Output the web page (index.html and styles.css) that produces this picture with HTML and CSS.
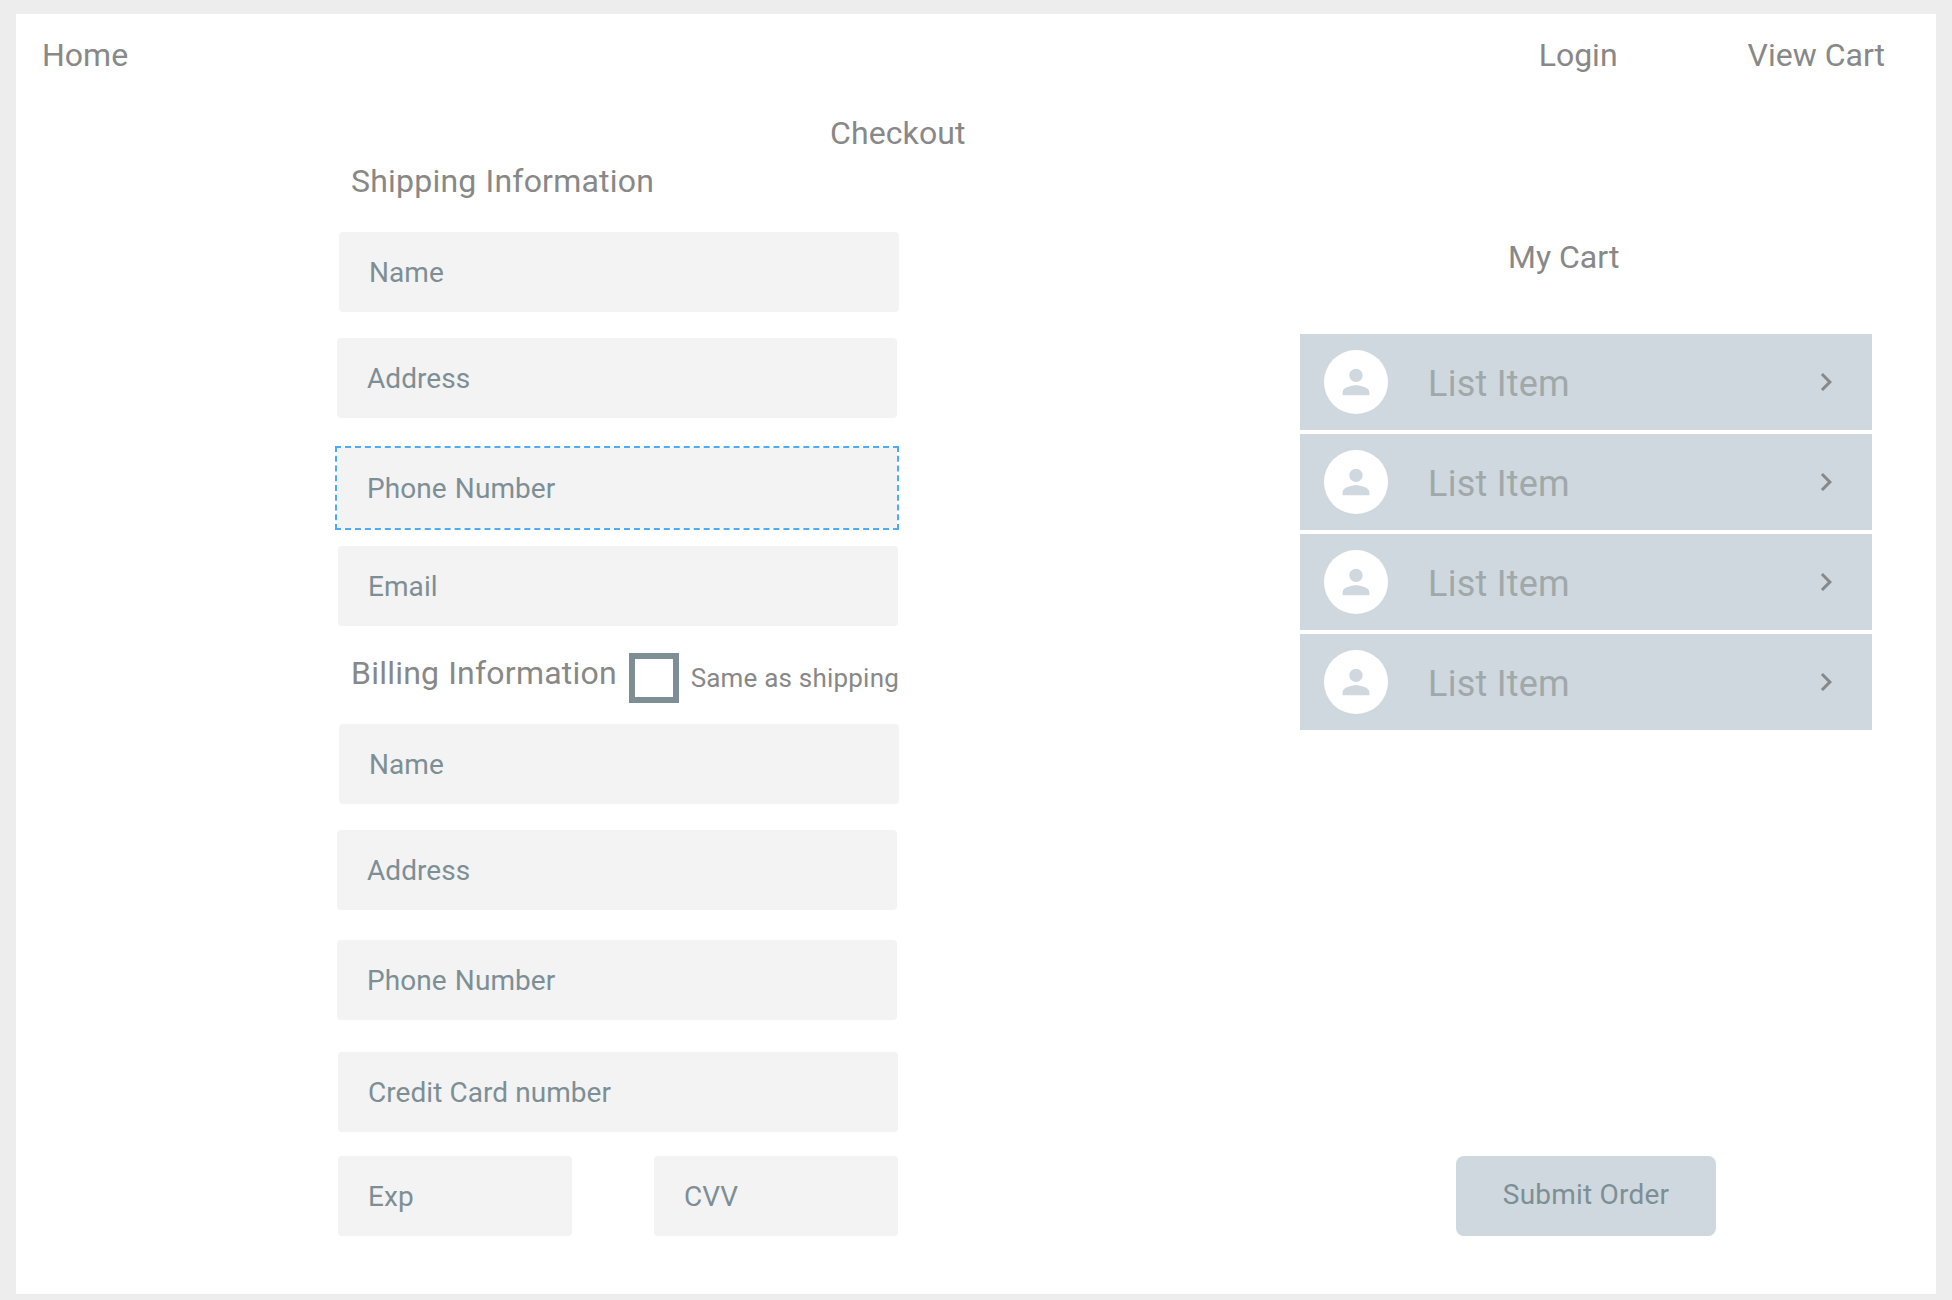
FILE: index.html
```html
<!DOCTYPE html>
<html lang="en">
<head>
<meta charset="utf-8">
<title>Checkout</title>
<link rel="stylesheet" href="styles.css">
</head>
<body>
<div class="page">
  <nav class="nav">
    <a class="nav-home">Home</a>
    <a class="nav-login">Login</a>
    <a class="nav-cart">View Cart</a>
  </nav>
  <h1 class="title">Checkout</h1>
  <main class="content">
    <form class="form">
      <h2 class="section">Shipping Information</h2>
      <div class="field field-name">Name</div>
      <div class="field field-address">Address</div>
      <div class="field field-phone selected">Phone Number</div>
      <div class="field field-email">Email</div>
      <div class="billing-head">
        <h2 class="section">Billing Information</h2>
        <span class="checkbox"></span>
        <span class="checkbox-label">Same as shipping</span>
      </div>
      <div class="field field-name-billing">Name</div>
      <div class="field field-address">Address</div>
      <div class="field field-phone-billing">Phone Number</div>
      <div class="field field-card">Credit Card number</div>
      <div class="card-row">
        <div class="field field-exp">Exp</div>
        <div class="field field-cvv">CVV</div>
      </div>
    </form>
    <aside class="cart">
      <h2 class="cart-title">My Cart</h2>
      <ul class="list">
        <li class="item">
          <span class="avatar"><svg viewBox="0 0 24 24"><path d="M12 12c2.21 0 4-1.79 4-4s-1.79-4-4-4-4 1.79-4 4 1.79 4 4 4zm0 2c-2.67 0-8 1.34-8 4v2h16v-2c0-2.66-5.33-4-8-4z"/></svg></span>
          <span class="item-text">List Item</span>
          <svg class="chevron" viewBox="0 0 24 24"><path d="M10 6L8.59 7.41 13.17 12l-4.58 4.59L10 18l6-6z"/></svg>
        </li>
        <li class="item">
          <span class="avatar"><svg viewBox="0 0 24 24"><path d="M12 12c2.21 0 4-1.79 4-4s-1.79-4-4-4-4 1.79-4 4 1.79 4 4 4zm0 2c-2.67 0-8 1.34-8 4v2h16v-2c0-2.66-5.33-4-8-4z"/></svg></span>
          <span class="item-text">List Item</span>
          <svg class="chevron" viewBox="0 0 24 24"><path d="M10 6L8.59 7.41 13.17 12l-4.58 4.59L10 18l6-6z"/></svg>
        </li>
        <li class="item">
          <span class="avatar"><svg viewBox="0 0 24 24"><path d="M12 12c2.21 0 4-1.79 4-4s-1.79-4-4-4-4 1.79-4 4 1.79 4 4 4zm0 2c-2.67 0-8 1.34-8 4v2h16v-2c0-2.66-5.33-4-8-4z"/></svg></span>
          <span class="item-text">List Item</span>
          <svg class="chevron" viewBox="0 0 24 24"><path d="M10 6L8.59 7.41 13.17 12l-4.58 4.59L10 18l6-6z"/></svg>
        </li>
        <li class="item">
          <span class="avatar"><svg viewBox="0 0 24 24"><path d="M12 12c2.21 0 4-1.79 4-4s-1.79-4-4-4-4 1.79-4 4 1.79 4 4 4zm0 2c-2.67 0-8 1.34-8 4v2h16v-2c0-2.66-5.33-4-8-4z"/></svg></span>
          <span class="item-text">List Item</span>
          <svg class="chevron" viewBox="0 0 24 24"><path d="M10 6L8.59 7.41 13.17 12l-4.58 4.59L10 18l6-6z"/></svg>
        </li>
      </ul>
      <button class="submit" type="button">Submit Order</button>
    </aside>
  </main>
</div>
</body>
</html>
```

FILE: styles.css
```css
* { box-sizing: border-box; }

body {
  margin: 0;
  padding: 14px 16px 6px;
  background: #ededed;
  font-family: Roboto, sans-serif;
  color: #888888;
  overflow: hidden;
}

.page {
  width: 1920px;
  height: 1280px;
  background: #ffffff;
}

.nav {
  display: flex;
  height: 99px;
  padding: 21px 51px 0 26px;
  font-size: 32px;
  line-height: 40px;
}

.nav-login { margin-left: auto; }
.nav-cart { margin-left: 130px; }

.title,
.section,
.cart-title {
  margin: 0;
  font-size: 32px;
  font-weight: 400;
  line-height: 40px;
  white-space: nowrap;
}

.title {
  padding-left: 814px;
  letter-spacing: 0.1px;
}

.content {
  display: flex;
  padding: 8px 64px 0 321px;
}

.form {
  width: 562px;
}

.section {
  padding-left: 14px;
  letter-spacing: 0.22px;
  word-spacing: 0.8px;
}

.field {
  width: 560px;
  height: 80px;
  padding-left: 30px;
  border-radius: 4px;
  background: #f3f3f3;
  color: #7d8f95;
  font-size: 28px;
  line-height: 81px;
  letter-spacing: 0.06px;
  white-space: nowrap;
}

.field-name { margin: 31px 0 26px 2px; }
.field-phone { margin-top: 30px; }
.field-email { margin: 18px 0 27px 1px; }
.field-name-billing { margin: 21px 0 26px 2px; }
.field-phone-billing { margin-top: 30px; }
.field-card { margin: 32px 0 24px 1px; }

.field-phone,
.field-phone-billing { word-spacing: 1.2px; }

.selected {
  position: relative;
  border-radius: 0;
}

.selected::after {
  content: "";
  position: absolute;
  inset: -2px;
  border: 2px dashed #4dabfa;
}

.billing-head {
  display: flex;
  height: 50px;
}

.billing-head .section { width: 292px; }

.checkbox {
  width: 50px;
  height: 50px;
  border: 6px solid #7d8f95;
}

.checkbox-label {
  padding: 10px 0 0 12px;
  font-size: 26px;
  line-height: 30px;
  letter-spacing: 0.2px;
  white-space: nowrap;
}

.card-row {
  display: flex;
  gap: 82px;
  padding-left: 1px;
}

.field-exp { width: 234px; }
.field-cvv { width: 244px; }

.cart {
  display: flex;
  flex-direction: column;
  align-items: center;
  width: 572px;
  margin-left: auto;
  padding-top: 76px;
}

.cart-title {
  align-self: flex-start;
  padding-left: 208px;
}

.list {
  display: flex;
  flex-direction: column;
  gap: 4px;
  width: 572px;
  margin: 57px 0 426px;
  padding: 0;
  list-style: none;
}

.item {
  display: flex;
  align-items: center;
  height: 96px;
  padding: 0 28px 0 24px;
  background: #cfd8de;
}

.avatar {
  display: flex;
  align-items: center;
  justify-content: center;
  width: 64px;
  height: 64px;
  border-radius: 50%;
  background: #ffffff;
}

.avatar svg {
  width: 40px;
  height: 40px;
  fill: #cfd8de;
}

.item-text {
  padding: 4px 0 0 40px;
  color: #a0a8aa;
  font-size: 36px;
  line-height: 42px;
  letter-spacing: 0.25px;
}

.chevron {
  width: 36px;
  height: 36px;
  margin-left: auto;
  fill: #888888;
}

.submit {
  width: 260px;
  height: 80px;
  padding: 0 0 3px;
  border: 0;
  border-radius: 8px;
  background: #cfd8de;
  color: #7d8f95;
  font: 28px Roboto, sans-serif;
  letter-spacing: 0.2px;
}
```
